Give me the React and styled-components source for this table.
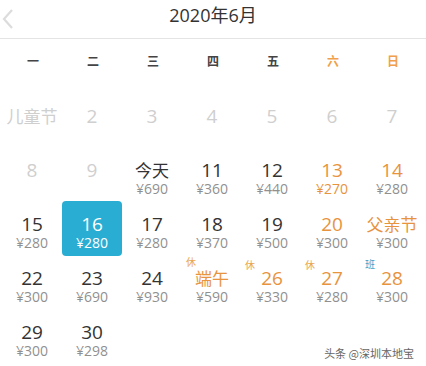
import React from "react";
import styled, { createGlobalStyle } from "styled-components";

const Global = createGlobalStyle`
  html, body { margin: 0; padding: 0; background: #fff; }
  body { font-family: "Open Sans", "Noto Sans CJK SC", sans-serif; }
`;

const Page = styled.div`
  position: relative;
  width: 426px;
  height: 366px;
  overflow: hidden;
  background: #fff;
`;

const Header = styled.div`
  display: grid;
  grid-template-columns: 30px 1fr 30px;
  align-items: center;
  height: 38px;
  border-bottom: 1px solid #e4e4e4;
`;

const Back = styled.div`
  display: flex;
  align-items: center;
  padding-left: 1px;
  height: 100%;
`;

const Title = styled.div`
  text-align: center;
  font-size: 18px;
  color: #333;
  line-height: 24px;
  margin-top: -8px;
`;

const Week = styled.div`
  display: grid;
  grid-template-columns: repeat(7, 60px);
  padding: 0 3px;
  height: 43px;
  align-items: center;
`;

const WeekDay = styled.div`
  text-align: center;
  font-size: 12px;
  font-weight: 700;
  color: ${(p) => (p.$weekend ? "#f0a04b" : "#444")};
  font-family: "Noto Sans CJK SC", sans-serif;
`;

const Grid = styled.div`
  display: grid;
  grid-template-columns: repeat(7, 60px);
  grid-auto-rows: 54px;
  padding: 11px 2px 0;
`;

const Cell = styled.div`
  position: relative;
  display: flex;
  flex-direction: column;
  align-items: center;
  padding-top: 13px;
  box-sizing: border-box;
  border-radius: 4px;
  background: ${(p) => (p.$selected ? "#2aadd3" : "transparent")};
  height: ${(p) => (p.$selected ? "55px" : "54px")};
`;

const colors = {
  normal: "#333",
  disabled: "#cfcfcf",
  orange: "#e8933d",
  white: "#fff",
};

const Num = styled.div`
  font-size: ${(p) => (p.$cjk ? "17px" : "19px")};
  line-height: 20px;
  color: ${(p) => colors[p.$tone]};
  font-family: ${(p) => (p.$cjk ? '"Noto Sans CJK SC", sans-serif' : '"Open Sans", "Noto Sans CJK SC", sans-serif')};
`;

const Price = styled.div`
  font-size: 14px;
  line-height: 16px;
  margin-top: 1px;
  color: ${(p) => (p.$tone === "orange" ? colors.orange : p.$tone === "white" ? "#fff" : "#909090")};
`;

const Tag = styled.span`
  position: absolute;
  left: ${(p) => p.$left}px;
  top: ${(p) => p.$top}px;
  font-size: 10px;
  line-height: 10px;
  font-family: "Noto Sans CJK SC", sans-serif;
  color: ${(p) => (p.$blue ? "#3d9fc9" : "#e8a650")};
`;

const Watermark = styled.div`
  position: absolute;
  right: 12px;
  bottom: 5px;
  font-size: 11px;
  color: #666;
  font-family: "Noto Sans CJK SC", sans-serif;
`;

const days = [
  { n: "儿童节", tone: "disabled", cjk: true },
  { n: "2", tone: "disabled" },
  { n: "3", tone: "disabled" },
  { n: "4", tone: "disabled" },
  { n: "5", tone: "disabled" },
  { n: "6", tone: "disabled" },
  { n: "7", tone: "disabled" },
  { n: "8", tone: "disabled" },
  { n: "9", tone: "disabled" },
  { n: "今天", p: "690", cjk: true },
  { n: "11", p: "360" },
  { n: "12", p: "440" },
  { n: "13", p: "270", tone: "orange", pt: "orange" },
  { n: "14", p: "280", tone: "orange" },
  { n: "15", p: "280" },
  { n: "16", p: "280", selected: true },
  { n: "17", p: "280" },
  { n: "18", p: "370" },
  { n: "19", p: "500" },
  { n: "20", p: "300", tone: "orange" },
  { n: "父亲节", p: "300", tone: "orange", cjk: true },
  { n: "22", p: "300" },
  { n: "23", p: "690" },
  { n: "24", p: "930" },
  { n: "端午", p: "590", tone: "orange", cjk: true, tag: "休", tl: 4, tt: 2 },
  { n: "26", p: "330", tone: "orange", tag: "休", tl: 3, tt: 5 },
  { n: "27", p: "280", tone: "orange", tag: "休", tl: 3, tt: 5 },
  { n: "28", p: "300", tone: "orange", tag: "班", blue: true, tl: 3, tt: 4 },
  { n: "29", p: "300" },
  { n: "30", p: "298" },
];

const weekdays = ["一", "二", "三", "四", "五", "六", "日"];

export default function App() {
  return (
    <Page>
      <Global />
      <Header>
        <Back>
          <svg width="14" height="22" viewBox="0 0 14 22">
            <path d="M11 2 L3 11 L11 20" fill="none" stroke="#dcdcdc" strokeWidth="2.2" />
          </svg>
        </Back>
        <Title>2020年6月</Title>
        <div />
      </Header>
      <Week>
        {weekdays.map((w, i) => (
          <WeekDay key={w} $weekend={i >= 5}>{w}</WeekDay>
        ))}
      </Week>
      <Grid>
        {days.map((d) => {
          const tone = d.selected ? "white" : d.tone || "normal";
          return (
            <Cell key={d.n} $selected={d.selected}>
              {d.tag && (
                <Tag $blue={d.blue} $left={d.tl} $top={d.tt}>{d.tag}</Tag>
              )}
              <Num $tone={tone} $cjk={d.cjk}>{d.n}</Num>
              {d.p && (
                <Price $tone={d.selected ? "white" : d.pt}>¥{d.p}</Price>
              )}
            </Cell>
          );
        })}
      </Grid>
      <Watermark>头条 @深圳本地宝</Watermark>
    </Page>
  );
}
